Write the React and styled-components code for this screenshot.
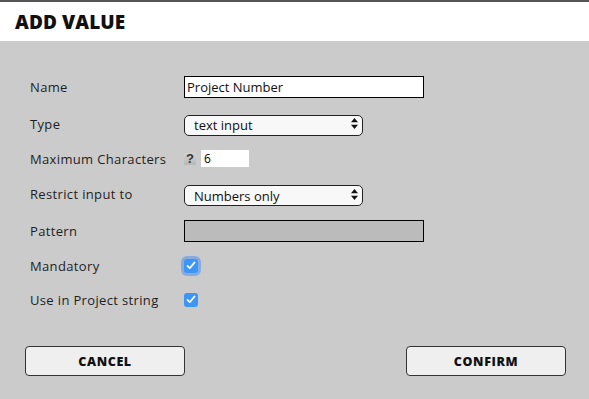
import React from "react";
import styled, { createGlobalStyle } from "styled-components";

const Global = createGlobalStyle`
  html, body { margin: 0; padding: 0; background: #cbcbcb; }
  body { font-family: "Open Sans", "Liberation Sans", sans-serif; }
`;

const Dialog = styled.div`
  width: 589px;
  height: 399px;
  background: #cbcbcb;
  display: flex;
  flex-direction: column;
`;

const Header = styled.div`
  height: 39px;
  border-top: 2px solid #555;
  background: #fff;
  display: flex;
  align-items: center;
  padding-left: 15px;
`;

const Title = styled.h1`
  margin: 0;
  font-family: "Open Sans", sans-serif;
  font-weight: 800;
  font-size: 19px;
  letter-spacing: 0.1px;
  color: #111;
`;

const Body = styled.div`
  padding: 27px 24px 0 30px;
`;

const Form = styled.div`
  display: grid;
  grid-template-columns: 154px 1fr;
  grid-template-rows: 37px 37px 33px 38px 35px 35px 33px;
  align-items: center;
`;

const Label = styled.label`
  font-size: 13px;
  color: #1e1e1e;
  letter-spacing: 0.35px;
`;

const TextInput = styled.input`
  box-sizing: border-box;
  width: 240px;
  height: 22px;
  border: 1px solid #000;
  background: ${(p) => (p.$disabled ? "#bbbbbb" : "#fff")};
  font-family: "Open Sans", sans-serif;
  font-size: 13px;
  padding: 0 2px;
  color: #111;
  outline: none;
`;

const SelectWrap = styled.div`
  position: relative;
  width: 179px;
  height: 21px;
`;

const Select = styled.select`
  appearance: none;
  -webkit-appearance: none;
  box-sizing: border-box;
  width: 100%;
  height: 100%;
  border: 1px solid #222;
  border-radius: 5px;
  background: #f8f8f8;
  font-family: "Open Sans", sans-serif;
  font-size: 13px;
  color: #111;
  padding: 0 0 0 9px;
  outline: none;
`;

const Arrows = styled.svg`
  position: absolute;
  right: 5px;
  top: 5px;
  pointer-events: none;
`;

const Inline = styled.div`
  display: flex;
  align-items: center;
  gap: 5px;
`;

const Help = styled.span`
  width: 12px;
  height: 12px;
  display: flex;
  align-items: center;
  justify-content: center;
  font-family: "Liberation Sans", sans-serif;
  font-weight: 700;
  font-size: 13px;
  color: #333;
  background: linear-gradient(#d2d2d2, #b8b8b8);
  border-radius: 1px;
`;

const SmallInput = styled.input`
  box-sizing: border-box;
  width: 48px;
  height: 17px;
  border: none;
  background: #fff;
  font-family: "Open Sans", sans-serif;
  font-size: 12px;
  padding: 0 3px;
  outline: none;
`;

const Check = styled.span`
  width: 14px;
  height: 14px;
  border-radius: 3px;
  background: #3d95f6;
  display: flex;
  align-items: center;
  justify-content: center;
  box-shadow: ${(p) => (p.$focus ? "0 0 0 3px rgba(90,150,235,0.6)" : "none")};
`;

const Buttons = styled.div`
  display: flex;
  justify-content: space-between;
  padding: 30px 23px 0 25px;
`;

const Button = styled.button`
  box-sizing: border-box;
  width: 160px;
  height: 30px;
  border: 1px solid #333;
  border-radius: 4px;
  background: #efefef;
  font-family: "Open Sans", sans-serif;
  font-weight: 800;
  font-size: 12.5px;
  color: #111;
  letter-spacing: 0.6px;
  padding: 1px 0 0;
`;

const SelectBox = ({ value }) => (
  <SelectWrap>
    <Select defaultValue={value}>
      <option>{value}</option>
    </Select>
    <Arrows width="7" height="11" viewBox="0 0 7 11">
      <path d="M3.5 0 L7 4.2 H0 Z" fill="#111" />
      <path d="M3.5 11 L7 6.8 H0 Z" fill="#111" />
    </Arrows>
  </SelectWrap>
);

const CheckBox = ({ focus }) => (
  <Check $focus={focus}>
    <svg width="10" height="9" viewBox="0 0 10 9">
      <path d="M1.5 4.8 L3.8 7.2 L8.6 1.4" stroke="#fff" strokeWidth="1.7" fill="none" strokeLinecap="round" strokeLinejoin="round" />
    </svg>
  </Check>
);

export default function App() {
  return (
    <>
      <Global />
      <Dialog>
        <Header>
          <Title>ADD VALUE</Title>
        </Header>
        <Body>
          <Form>
            <Label>Name</Label>
            <TextInput defaultValue="Project Number" />
            <Label>Type</Label>
            <SelectBox value="text input" />
            <Label>Maximum Characters</Label>
            <Inline>
              <Help>?</Help>
              <SmallInput defaultValue="6" />
            </Inline>
            <Label>Restrict input to</Label>
            <SelectBox value="Numbers only" />
            <Label>Pattern</Label>
            <TextInput $disabled readOnly />
            <Label>Mandatory</Label>
            <CheckBox focus />
            <Label>Use in Project string</Label>
            <CheckBox />
          </Form>
        </Body>
        <Buttons>
          <Button>CANCEL</Button>
          <Button>CONFIRM</Button>
        </Buttons>
      </Dialog>
    </>
  );
}
